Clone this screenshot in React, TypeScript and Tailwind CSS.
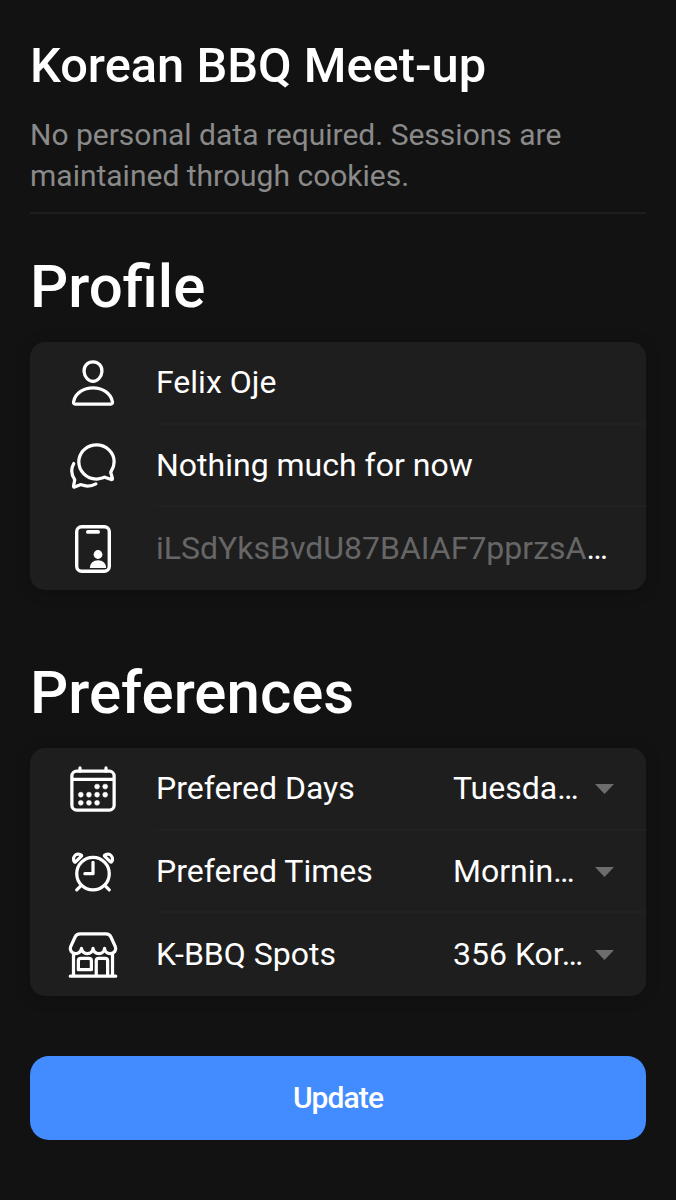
import type { ReactNode } from "react";
import {
  IoAlarmOutline,
  IoCalendarOutline,
  IoChatbubblesOutline,
  IoPersonOutline,
  IoStorefrontOutline,
} from "react-icons/io5";

// Phone outline with a small contact badge in the corner
function PhoneContactIcon() {
  return (
    <svg width="52" height="52" viewBox="0 0 52 52" fill="none">
      <rect x="9.7" y="3.7" width="32.6" height="44.6" rx="5" stroke="currentColor" strokeWidth="3.4" />
      <rect x="19" y="7" width="14" height="3.8" rx="1.9" fill="currentColor" />
      <circle cx="31" cy="31.5" r="4.4" fill="currentColor" />
      <path d="M22.9 45c0-5 3.5-7.8 8.1-7.8s8.1 2.8 8.1 7.8z" fill="currentColor" />
    </svg>
  );
}

function Card({ children }: { children: ReactNode }) {
  return (
    <div className="flex h-[248px] flex-col rounded-[15px] bg-[#1e1e1e] shadow-[0_2px_16px_rgba(0,0,0,0.2)]">
      {children}
    </div>
  );
}

interface RowProps {
  icon: ReactNode;
  children: ReactNode;
  last?: boolean;
}

function Row({ icon, children, last }: RowProps) {
  return (
    <div className="flex min-h-0 flex-1">
      <div className="flex w-[126px] shrink-0 items-center justify-center">{icon}</div>
      <div
        className={
          last
            ? "flex min-w-0 flex-1 items-center pb-px"
            : "flex min-w-0 flex-1 items-center border-b-2 border-[#212121]"
        }
      >
        {children}
      </div>
    </div>
  );
}

function SelectField({ label, value }: { label: string; value: string }) {
  return (
    <>
      <span className="w-[297px] shrink-0">{label}</span>
      <span className="w-[142px] shrink-0 whitespace-nowrap">{value}</span>
      <svg width="19" height="10" viewBox="0 0 19 10" className="mt-0.5 shrink-0">
        <path d="M0 0h19L9.5 10z" fill="#6d6d6d" />
      </svg>
    </>
  );
}

export default function App() {
  return (
    <div className="h-[1200px] w-[676px] bg-[#121212] px-[30px] pt-[34px] font-['Roboto',sans-serif] text-white">
      <header className="border-b-2 border-[#1e1e1e] pb-4">
        <h1 className="text-[48.8px] leading-[64px] font-medium">Korean BBQ Meet-up</h1>
        <p className="mt-4 w-[580px] text-[30px] leading-[41px] text-[#8a8a8a]">
          No personal data required. Sessions are maintained through cookies.
        </p>
      </header>

      <section className="pt-[37px]">
        <h2 className="mb-[19px] text-[60px] leading-[72px] font-medium">Profile</h2>
        <div className="text-[32px] leading-[38px]">
          <Card>
            <Row icon={<IoPersonOutline size={52} />}>Felix Oje</Row>
            <Row icon={<IoChatbubblesOutline size={52} />}>Nothing much for now</Row>
            <Row icon={<PhoneContactIcon />} last>
              <span>
                <span className="text-[#666666]">iLSdYksBvdU87BAIAF7pprzsA</span>…
              </span>
            </Row>
          </Card>
        </div>
      </section>

      <section className="pt-[67px]">
        <h2 className="mb-[19px] text-[60px] leading-[72px] font-medium">Preferences</h2>
        <div className="text-[32px] leading-[38px]">
          <Card>
            <Row icon={<IoCalendarOutline size={52} className="[&_circle]:[stroke-width:6px]" />}>
              <SelectField label="Prefered Days" value="Tuesda…" />
            </Row>
            <Row icon={<IoAlarmOutline size={52} />}>
              <SelectField label="Prefered Times" value="Mornin…" />
            </Row>
            <Row icon={<IoStorefrontOutline size={52} />} last>
              <SelectField label="K-BBQ Spots" value="356 Kor…" />
            </Row>
          </Card>
        </div>
      </section>

      <button className="mt-[60px] h-[84px] w-full rounded-[19px] bg-[#428cff] pb-[2px] text-[30px] font-medium tracking-[-0.9px]">
        Update
      </button>
    </div>
  );
}
